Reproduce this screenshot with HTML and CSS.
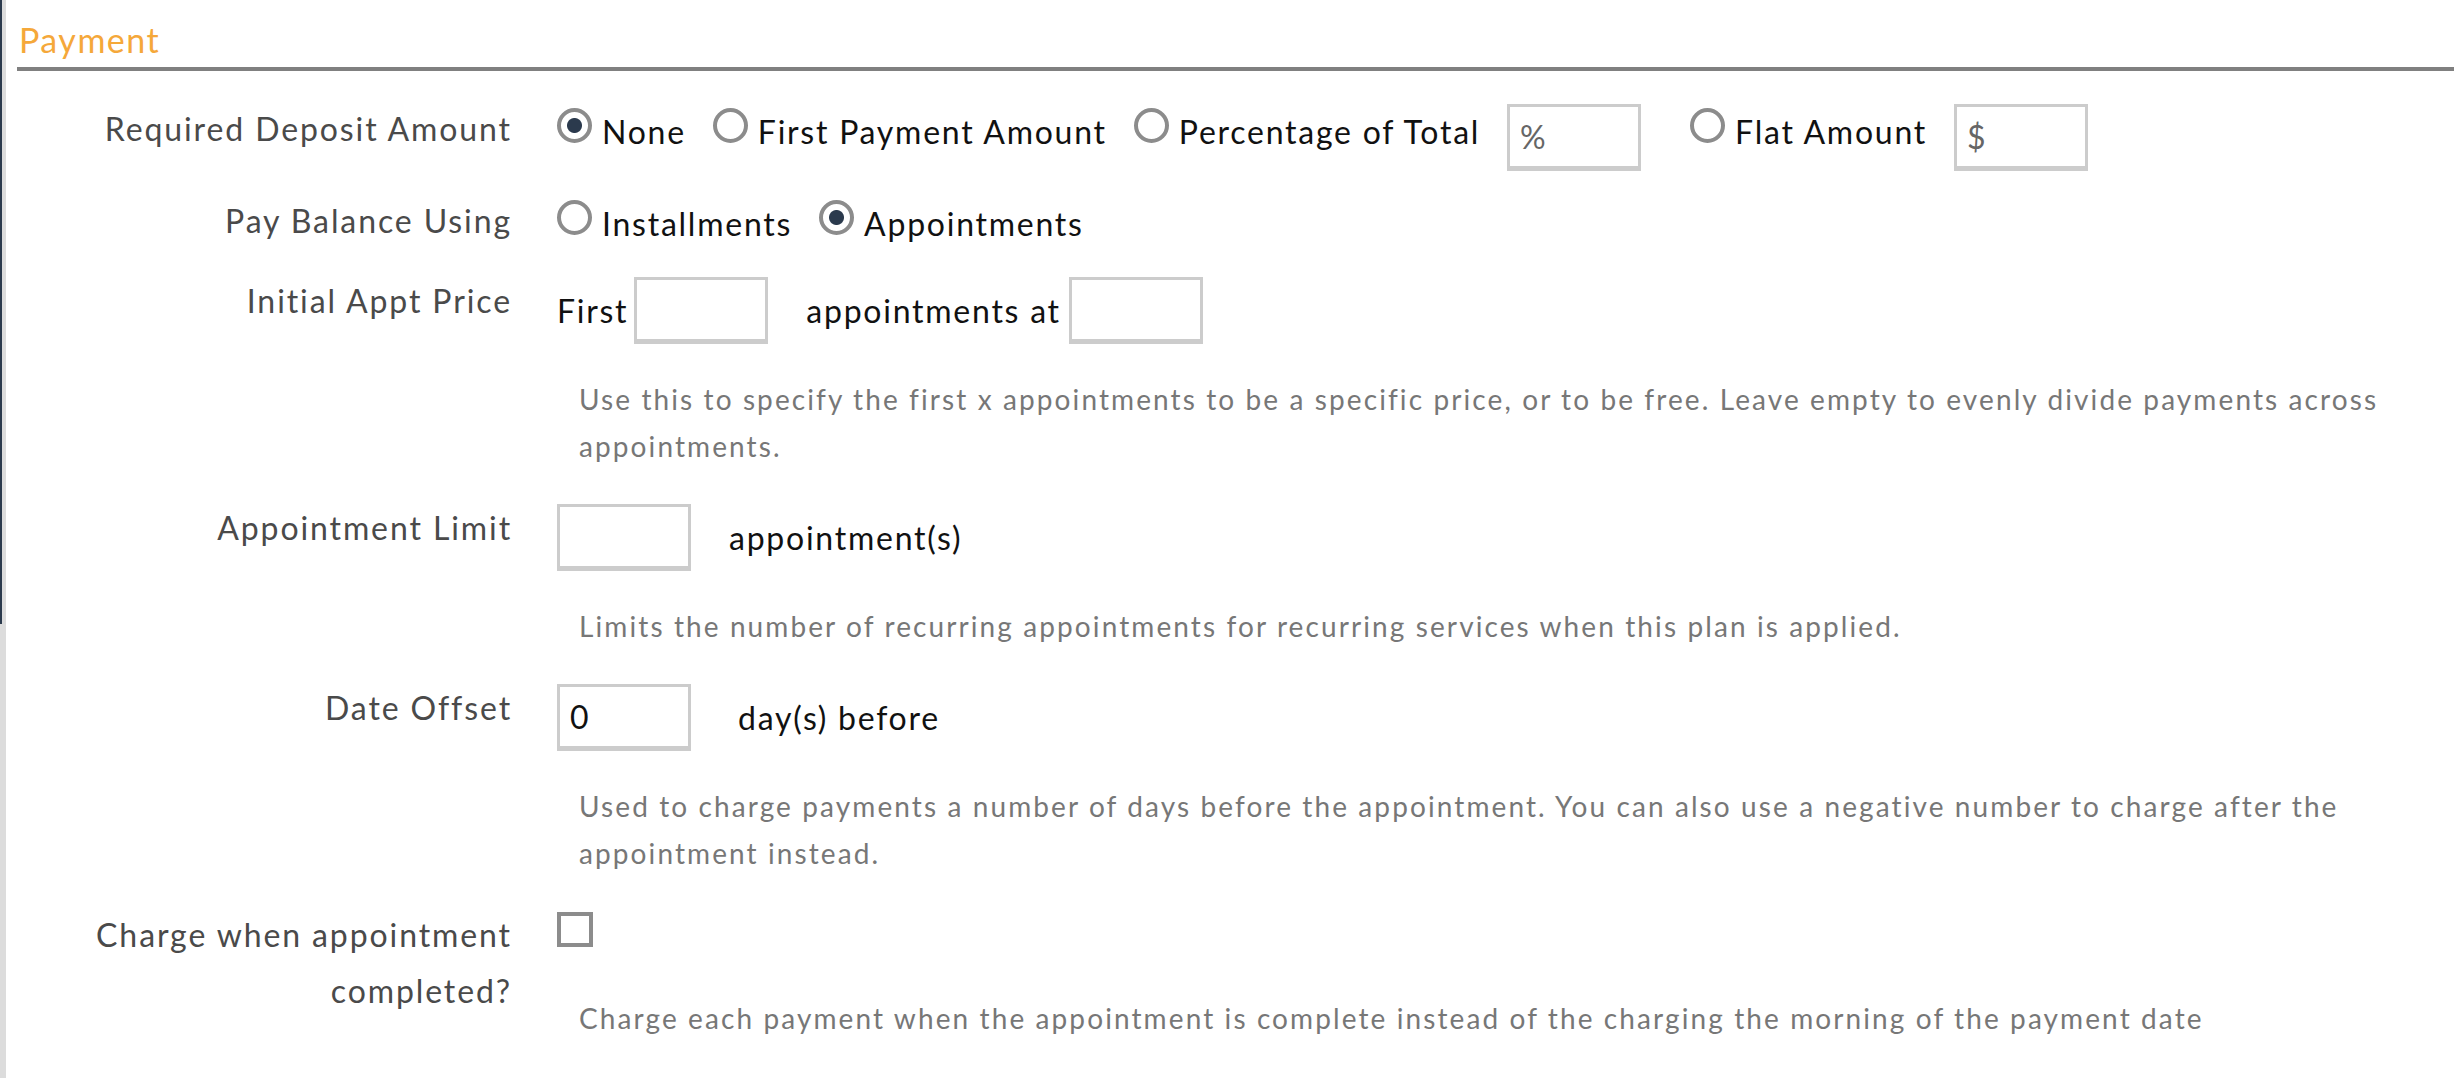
FILE: index.html
```html
<!DOCTYPE html>
<html lang="en">
<head>
  <meta charset="UTF-8" />
  <meta name="viewport" content="width=device-width, initial-scale=1.0" />
  <title>Payment Plan</title>
  <link rel="stylesheet" href="styles.css">
</head>
<body>
  <div class="page">
    <div class="edge"><div class="edge-thumb"></div></div>

    <div class="content">
      <h2 class="section-title">Payment</h2>

      <!-- Deposit -->
      <div class="field">
        <div class="field-label">Required Deposit Amount</div>
        <div class="field-body">
          <div class="line line-top">
            <label class="opt"><input type="radio" name="deposit" class="radio" checked>None</label>
            <label class="opt"><input type="radio" name="deposit" class="radio">First Payment Amount</label>
            <label class="opt"><input type="radio" name="deposit" class="radio">Percentage of Total</label>
            <input type="text" class="box box-spaced" placeholder="%">
            <label class="opt"><input type="radio" name="deposit" class="radio">Flat Amount</label>
            <input type="text" class="box" placeholder="$">
          </div>
        </div>
      </div>

      <!-- Balance -->
      <div class="field">
        <div class="field-label">Pay Balance Using</div>
        <div class="field-body">
          <div class="line line-top">
            <label class="opt"><input type="radio" name="balance" class="radio">Installments</label>
            <label class="opt"><input type="radio" name="balance" class="radio" checked>Appointments</label>
          </div>
        </div>
      </div>

      <!-- Initial price -->
      <div class="field">
        <div class="field-label">Initial Appt Price</div>
        <div class="field-body">
          <div class="line">
            <span class="lead">First</span>
            <input type="text" class="box">
            <span class="unit">appointments at</span>
            <input type="text" class="box box-after">
          </div>
          <p class="help">Use this to specify the first x appointments to be a specific price, or to be free. Leave empty to evenly divide payments across appointments.</p>
        </div>
      </div>

      <!-- Limit -->
      <div class="field">
        <div class="field-label">Appointment Limit</div>
        <div class="field-body">
          <div class="line">
            <input type="text" class="box">
            <span class="unit">appointment(s)</span>
          </div>
          <p class="help">Limits the number of recurring appointments for recurring services when this plan is applied.</p>
        </div>
      </div>

      <!-- Offset -->
      <div class="field">
        <div class="field-label">Date Offset</div>
        <div class="field-body">
          <div class="line">
            <input type="text" class="box" value="0">
            <span class="unit unit-wide">day(s) before</span>
          </div>
          <p class="help">Used to charge payments a number of days before the appointment. You can also use a negative number to charge after the appointment instead.</p>
        </div>
      </div>

      <!-- Charge on complete -->
      <div class="field">
        <div class="field-label">Charge when appointment completed?</div>
        <div class="field-body">
          <div class="check-line"><input type="checkbox" class="checkbox"></div>
          <p class="help">Charge each payment when the appointment is complete instead of the charging the morning of the payment date</p>
        </div>
      </div>
    </div>
  </div>
</body>
</html>
```

FILE: styles.css
```css
* { margin: 0; padding: 0; box-sizing: border-box; }
html, body { width: 100%; height: 100%; overflow: hidden; background: #fff; font-family: 'Lato', 'Open Sans', sans-serif; color: #4a4a4a; }

/* Page frame */
.page { display: flex; min-height: 100%; }
.edge { width: 6px; flex-shrink: 0; background: #dcdcdc; }
.edge-thumb { width: 2px; height: 624px; background: #2b3a4d; }
.content { flex: 1; padding-left: 11px; }

/* Section header */
.section-title { font-size: 34px; font-weight: 400; color: #f5a83a; line-height: 40px; letter-spacing: 1.5px; padding: 20px 0 7px 2px; border-bottom: 4px solid #808080; margin-bottom: 30px; }

/* Form rows */
.field { display: grid; grid-template-columns: 495px 1fr; column-gap: 45px; margin-bottom: 22px; }
.field-label { text-align: right; font-size: 32px; line-height: 56px; letter-spacing: 1.9px; }
.line { display: flex; align-items: center; padding-top: 4px; font-size: 32px; letter-spacing: 1.75px; color: #111; }
.line-top { align-items: flex-start; padding-top: 0; }

/* Radios */
.opt { display: flex; align-items: center; gap: 10px; height: 56px; margin-top: 2px; margin-right: 27px; cursor: pointer; }
.radio { appearance: none; width: 35px; height: 35px; flex-shrink: 0; border: 4px solid #8c8c8c; border-radius: 50%; background: #fff; margin-bottom: 12px; }
.radio:checked { background: radial-gradient(circle, #2b3a4d 0 7px, #fff 8px); }

/* Text boxes */
.box { width: 134px; height: 67px; flex-shrink: 0; border: 3px solid #ccc; border-bottom-width: 5px; padding: 0 10px; font: inherit; letter-spacing: 0; color: #111; background: #fff; outline: none; }
.box::placeholder { color: #666; }
.line-top .box { margin-top: 3px; margin-right: 28px; }
.line-top .box-spaced { margin-right: 49px; }
.lead { margin-right: 6px; }
.unit { margin-left: 38px; }
.unit-wide { margin-left: 47px; }
.box-after { margin-left: 8px; }

/* Help text */
.help { padding-left: 22px; margin: 32px 0 8px; font-size: 28px; line-height: 47px; letter-spacing: 2.1px; color: #777; }

/* Checkbox */
.check-line { height: 56px; padding-top: 5px; }
.checkbox { appearance: none; display: block; width: 36px; height: 35px; border: 4px solid #8c8c8c; background: #fff; }
```
